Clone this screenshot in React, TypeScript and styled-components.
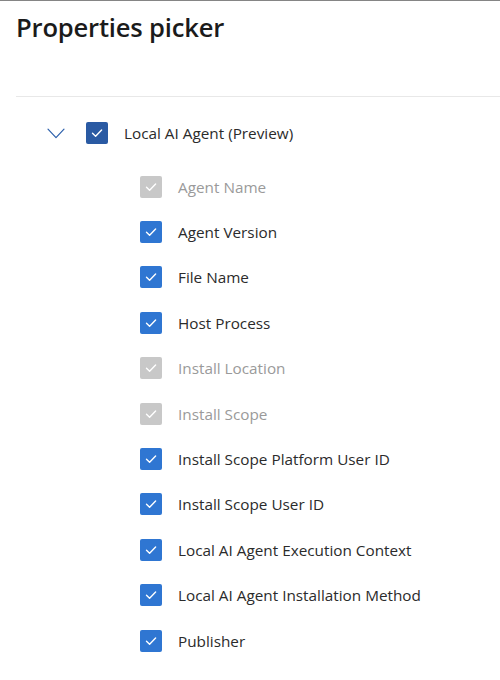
import React from "react";
import styled, { createGlobalStyle } from "styled-components";

const Global = createGlobalStyle`
  html, body { margin: 0; padding: 0; background: #ffffff; }
  body { font-family: "Open Sans", "Noto Sans", sans-serif; }
`;

const Page = styled.div`
  width: 500px;
  height: 680px;
  box-sizing: border-box;
  border-top: 1px solid #858585;
  padding-left: 16px;
  overflow: hidden;
`;

const Header = styled.div`
  height: 95px;
  border-bottom: 1px solid #e8e8e8;
  box-sizing: content-box;
`;

const Title = styled.h1`
  margin: 0;
  padding-top: 10px;
  font-size: 25.6px;
  font-weight: 600;
  color: #1b1b1b;
  line-height: 33px;
  letter-spacing: -0.2px;
`;

const Tree = styled.div`
  display: flex;
  flex-direction: column;
  padding-top: 14px;
`;

const ParentRow = styled.div`
  display: flex;
  align-items: center;
  height: 44px;
  padding-left: 31px;
`;

const ChevronBox = styled.span`
  display: flex;
  width: 18px;
  justify-content: center;
  margin-right: 21px;
`;

const ChildList = styled.div`
  display: flex;
  flex-direction: column;
  padding-left: 124px;
  padding-top: 9px;
`;

const ChildRow = styled.div`
  display: flex;
  align-items: center;
  height: 45.4px;
`;

const Box = styled.span<{ $variant: "parent" | "child" | "disabled" }>`
  width: 22px;
  height: 22px;
  border-radius: 2px;
  flex: none;
  display: flex;
  align-items: center;
  justify-content: center;
  background: ${(p) =>
    p.$variant === "parent" ? "#2a5aa3" : p.$variant === "child" ? "#2f76d2" : "#c8c8c8"};
`;

const Label = styled.span<{ $disabled?: boolean; $gap: number }>`
  margin-left: ${(p) => p.$gap}px;
  font-size: 15.3px;
  color: ${(p) => (p.$disabled ? "#9a9a9a" : "#2b2b2b")};
  white-space: nowrap;
`;

const Check = () => (
  <svg width="14" height="14" viewBox="0 0 14 14" fill="none">
    <path d="M2.5 7.3 L5.6 10.2 L11.6 4" stroke="#ffffff" strokeWidth="1.4" strokeLinecap="round" strokeLinejoin="round" />
  </svg>
);

const Chevron = () => (
  <svg width="18" height="11" viewBox="0 0 18 11" fill="none">
    <path d="M1 1.2 L9 9.6 L17 1.2" stroke="#2b5fab" strokeWidth="1.2" strokeLinecap="round" strokeLinejoin="round" />
  </svg>
);

const items: { label: string; disabled?: boolean }[] = [
  { label: "Agent Name", disabled: true },
  { label: "Agent Version" },
  { label: "File Name" },
  { label: "Host Process" },
  { label: "Install Location", disabled: true },
  { label: "Install Scope", disabled: true },
  { label: "Install Scope Platform User ID" },
  { label: "Install Scope User ID" },
  { label: "Local AI Agent Execution Context" },
  { label: "Local AI Agent Installation Method" },
  { label: "Publisher" },
];

export default function App() {
  return (
    <>
      <Global />
      <Page>
        <Header>
          <Title>Properties picker</Title>
        </Header>
        <Tree>
          <ParentRow>
            <ChevronBox>
              <Chevron />
            </ChevronBox>
            <Box $variant="parent">
              <Check />
            </Box>
            <Label $gap={16}>Local AI Agent (Preview)</Label>
          </ParentRow>
          <ChildList>
            {items.map((it) => (
              <ChildRow key={it.label}>
                <Box $variant={it.disabled ? "disabled" : "child"}>
                  <Check />
                </Box>
                <Label $gap={16} $disabled={it.disabled}>
                  {it.label}
                </Label>
              </ChildRow>
            ))}
          </ChildList>
        </Tree>
      </Page>
    </>
  );
}
